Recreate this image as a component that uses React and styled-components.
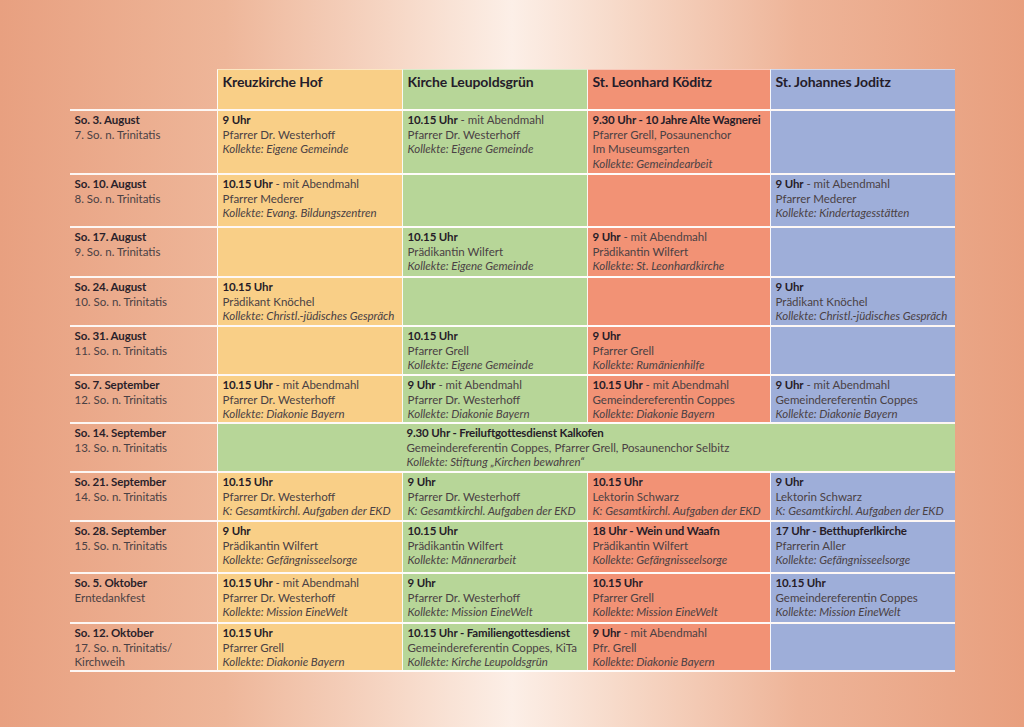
import React from "react";
import styled, { createGlobalStyle } from "styled-components";

const GlobalStyle = createGlobalStyle`
  html, body {
    margin: 0;
    padding: 0;
  }
  body {
    font-family: Lato, "Open Sans", sans-serif;
    background: linear-gradient(
      90deg,
      #e8a080 0%,
      #eeb699 22%,
      #f6d6c4 38%,
      #fcefe7 50%,
      #f6d6c4 62%,
      #eeb498 78%,
      #e89f7e 100%
    );
  }
`;

const COLORS = {
  hof: "#f9cf87",
  leu: "#b7d698",
  koe: "#f29275",
  jod: "#9eaed9",
};

const Page = styled.div`
  width: 1024px;
  height: 727px;
  display: flex;
  justify-content: center;
  padding-top: 69px;
  box-sizing: border-box;
`;

const Table = styled.div`
  width: 885px;
  border-bottom: 2px solid rgba(255, 255, 255, 0.9);
  align-self: flex-start;
`;

const Row = styled.div`
  display: grid;
  grid-template-columns: 147px 185px 185px 183px 185px;
  height: ${(p) => p.$h}px;
  box-sizing: border-box;
  border-top: ${(p) => (p.$head ? "none" : "2px solid rgba(255,255,255,0.9)")};
`;

const HeadCell = styled.div`
  background: ${(p) => p.$bg || "transparent"};
  border-left: ${(p) => (p.$bg ? "1px solid rgba(255,255,255,0.9)" : "none")};
  border-top: ${(p) => (p.$bg ? "1px solid rgba(255,255,255,0.5)" : "none")};
  padding: 2px 5px 0;
  font-size: 14px;
  font-weight: 700;
  color: #241c2a;
  line-height: 20px;
  letter-spacing: -0.1px;
`;

const DateCell = styled.div`
  padding: 2px 5px 0;
  font-size: 11.5px;
  line-height: 14.7px;
  color: #4a4144;
`;

const DateTitle = styled.div`
  font-weight: 700;
  color: #2a1f2a;
  letter-spacing: -0.1px;
`;

const Cell = styled.div`
  background: ${(p) => p.$bg};
  border-left: 1px solid rgba(255, 255, 255, 0.9);
  grid-column: ${(p) => (p.$span ? `span ${p.$span}` : "auto")};
  padding: 2px 4px 0 ${(p) => (p.$indent ? 189 : 5)}px;
  font-size: 11.5px;
  line-height: 14.7px;
  color: #4a4144;
  white-space: nowrap;
`;

const Time = styled.span`
  font-weight: 700;
  color: #261c28;
  letter-spacing: -0.15px;
`;

const Line = styled.div``;

const Kollekte = styled.div`
  font-style: italic;
`;

const heads = [
  ["Kreuzkirche Hof", COLORS.hof],
  ["Kirche Leupoldsgrün", COLORS.leu],
  ["St. Leonhard Köditz", COLORS.koe],
  ["St. Johannes Joditz", COLORS.jod],
];

const ev = (time, note, lines, kollekte) => ({ time, note, lines, kollekte });

const rows = [
  {
    h: 64,
    date: "So. 3. August",
    sub: ["7. So. n. Trinitatis"],
    cells: [
      ev("9 Uhr", "", ["Pfarrer Dr. Westerhoff"], "Kollekte: Eigene Gemeinde"),
      ev("10.15 Uhr", " - mit Abendmahl", ["Pfarrer Dr. Westerhoff"], "Kollekte: Eigene Gemeinde"),
      ev("9.30 Uhr - 10 Jahre Alte Wagnerei", "", ["Pfarrer Grell, Posaunenchor", "Im Museumsgarten"], "Kollekte: Gemeindearbeit"),
      null,
    ],
  },
  {
    h: 53,
    date: "So. 10. August",
    sub: ["8. So. n. Trinitatis"],
    cells: [
      ev("10.15 Uhr", " - mit Abendmahl", ["Pfarrer Mederer"], "Kollekte: Evang. Bildungszentren"),
      null,
      null,
      ev("9 Uhr", " - mit Abendmahl", ["Pfarrer Mederer"], "Kollekte: Kindertagesstätten"),
    ],
  },
  {
    h: 50,
    date: "So. 17. August",
    sub: ["9. So. n. Trinitatis"],
    cells: [
      null,
      ev("10.15 Uhr", "", ["Prädikantin Wilfert"], "Kollekte: Eigene Gemeinde"),
      ev("9 Uhr", " - mit Abendmahl", ["Prädikantin Wilfert"], "Kollekte: St. Leonhardkirche"),
      null,
    ],
  },
  {
    h: 49,
    date: "So. 24. August",
    sub: ["10. So. n. Trinitatis"],
    cells: [
      ev("10.15 Uhr", "", ["Prädikant Knöchel"], "Kollekte: Christl.-jüdisches Gespräch"),
      null,
      null,
      ev("9 Uhr", "", ["Prädikant Knöchel"], "Kollekte: Christl.-jüdisches Gespräch"),
    ],
  },
  {
    h: 49,
    date: "So. 31. August",
    sub: ["11. So. n. Trinitatis"],
    cells: [
      null,
      ev("10.15 Uhr", "", ["Pfarrer Grell"], "Kollekte: Eigene Gemeinde"),
      ev("9 Uhr", "", ["Pfarrer Grell"], "Kollekte: Rumänienhilfe"),
      null,
    ],
  },
  {
    h: 48,
    date: "So. 7. September",
    sub: ["12. So. n. Trinitatis"],
    cells: [
      ev("10.15 Uhr", " - mit Abendmahl", ["Pfarrer Dr. Westerhoff"], "Kollekte: Diakonie Bayern"),
      ev("9 Uhr", " - mit Abendmahl", ["Pfarrer Dr. Westerhoff"], "Kollekte: Diakonie Bayern"),
      ev("10.15 Uhr", " - mit Abendmahl", ["Gemeindereferentin Coppes"], "Kollekte: Diakonie Bayern"),
      ev("9 Uhr", " - mit Abendmahl", ["Gemeindereferentin Coppes"], "Kollekte: Diakonie Bayern"),
    ],
  },
  {
    h: 49,
    date: "So. 14. September",
    sub: ["13. So. n. Trinitatis"],
    joint: ev(
      "9.30 Uhr - Freiluftgottesdienst Kalkofen",
      "",
      ["Gemeindereferentin Coppes, Pfarrer Grell, Posaunenchor Selbitz"],
      "Kollekte: Stiftung „Kirchen bewahren“"
    ),
  },
  {
    h: 49,
    date: "So. 21. September",
    sub: ["14. So. n. Trinitatis"],
    cells: [
      ev("10.15 Uhr", "", ["Pfarrer Dr. Westerhoff"], "K: Gesamtkirchl. Aufgaben der EKD"),
      ev("9 Uhr", "", ["Pfarrer Dr. Westerhoff"], "K: Gesamtkirchl. Aufgaben der EKD"),
      ev("10.15 Uhr", "", ["Lektorin Schwarz"], "K: Gesamtkirchl. Aufgaben der EKD"),
      ev("9 Uhr", "", ["Lektorin Schwarz"], "K: Gesamtkirchl. Aufgaben der EKD"),
    ],
  },
  {
    h: 52,
    date: "So. 28. September",
    sub: ["15. So. n. Trinitatis"],
    cells: [
      ev("9 Uhr", "", ["Prädikantin Wilfert"], "Kollekte: Gefängnisseelsorge"),
      ev("10.15 Uhr", "", ["Prädikantin Wilfert"], "Kollekte: Männerarbeit"),
      ev("18 Uhr - Wein und Waafn", "", ["Prädikantin Wilfert"], "Kollekte: Gefängnisseelsorge"),
      ev("17 Uhr - Betthupferlkirche", "", ["Pfarrerin Aller"], "Kollekte: Gefängnisseelsorge"),
    ],
  },
  {
    h: 50,
    date: "So. 5. Oktober",
    sub: ["Erntedankfest"],
    cells: [
      ev("10.15 Uhr", " - mit Abendmahl", ["Pfarrer Dr. Westerhoff"], "Kollekte: Mission EineWelt"),
      ev("9 Uhr", "", ["Pfarrer Dr. Westerhoff"], "Kollekte: Mission EineWelt"),
      ev("10.15 Uhr", "", ["Pfarrer Grell"], "Kollekte: Mission EineWelt"),
      ev("10.15 Uhr", "", ["Gemeindereferentin Coppes"], "Kollekte: Mission EineWelt"),
    ],
  },
  {
    h: 48,
    date: "So. 12. Oktober",
    sub: ["17. So. n. Trinitatis/", "Kirchweih"],
    cells: [
      ev("10.15 Uhr", "", ["Pfarrer Grell"], "Kollekte: Diakonie Bayern"),
      ev("10.15 Uhr - Familiengottesdienst", "", ["Gemeindereferentin Coppes, KiTa"], "Kollekte: Kirche Leupoldsgrün"),
      ev("9 Uhr", " - mit Abendmahl", ["Pfr. Grell"], "Kollekte: Diakonie Bayern"),
      null,
    ],
  },
];

function Event({ e }) {
  if (!e) return null;
  return (
    <>
      <Line>
        <Time>{e.time}</Time>
        {e.note}
      </Line>
      {e.lines.map((l) => (
        <Line key={l}>{l}</Line>
      ))}
      <Kollekte>{e.kollekte}</Kollekte>
    </>
  );
}

export default function App() {
  return (
    <>
      <GlobalStyle />
      <Page>
        <Table>
          <Row $h={40} $head>
            <HeadCell />
            {heads.map(([name, bg]) => (
              <HeadCell key={name} $bg={bg}>
                {name}
              </HeadCell>
            ))}
          </Row>
          {rows.map((r) => (
            <Row key={r.date} $h={r.h}>
              <DateCell>
                <DateTitle>{r.date}</DateTitle>
                {r.sub.map((s) => (
                  <div key={s}>{s}</div>
                ))}
              </DateCell>
              {r.joint ? (
                <Cell $bg={COLORS.leu} $span={4} $indent>
                  <Event e={r.joint} />
                </Cell>
              ) : (
                r.cells.map((c, i) => (
                  <Cell key={i} $bg={heads[i][1]}>
                    <Event e={c} />
                  </Cell>
                ))
              )}
            </Row>
          ))}
        </Table>
      </Page>
    </>
  );
}
